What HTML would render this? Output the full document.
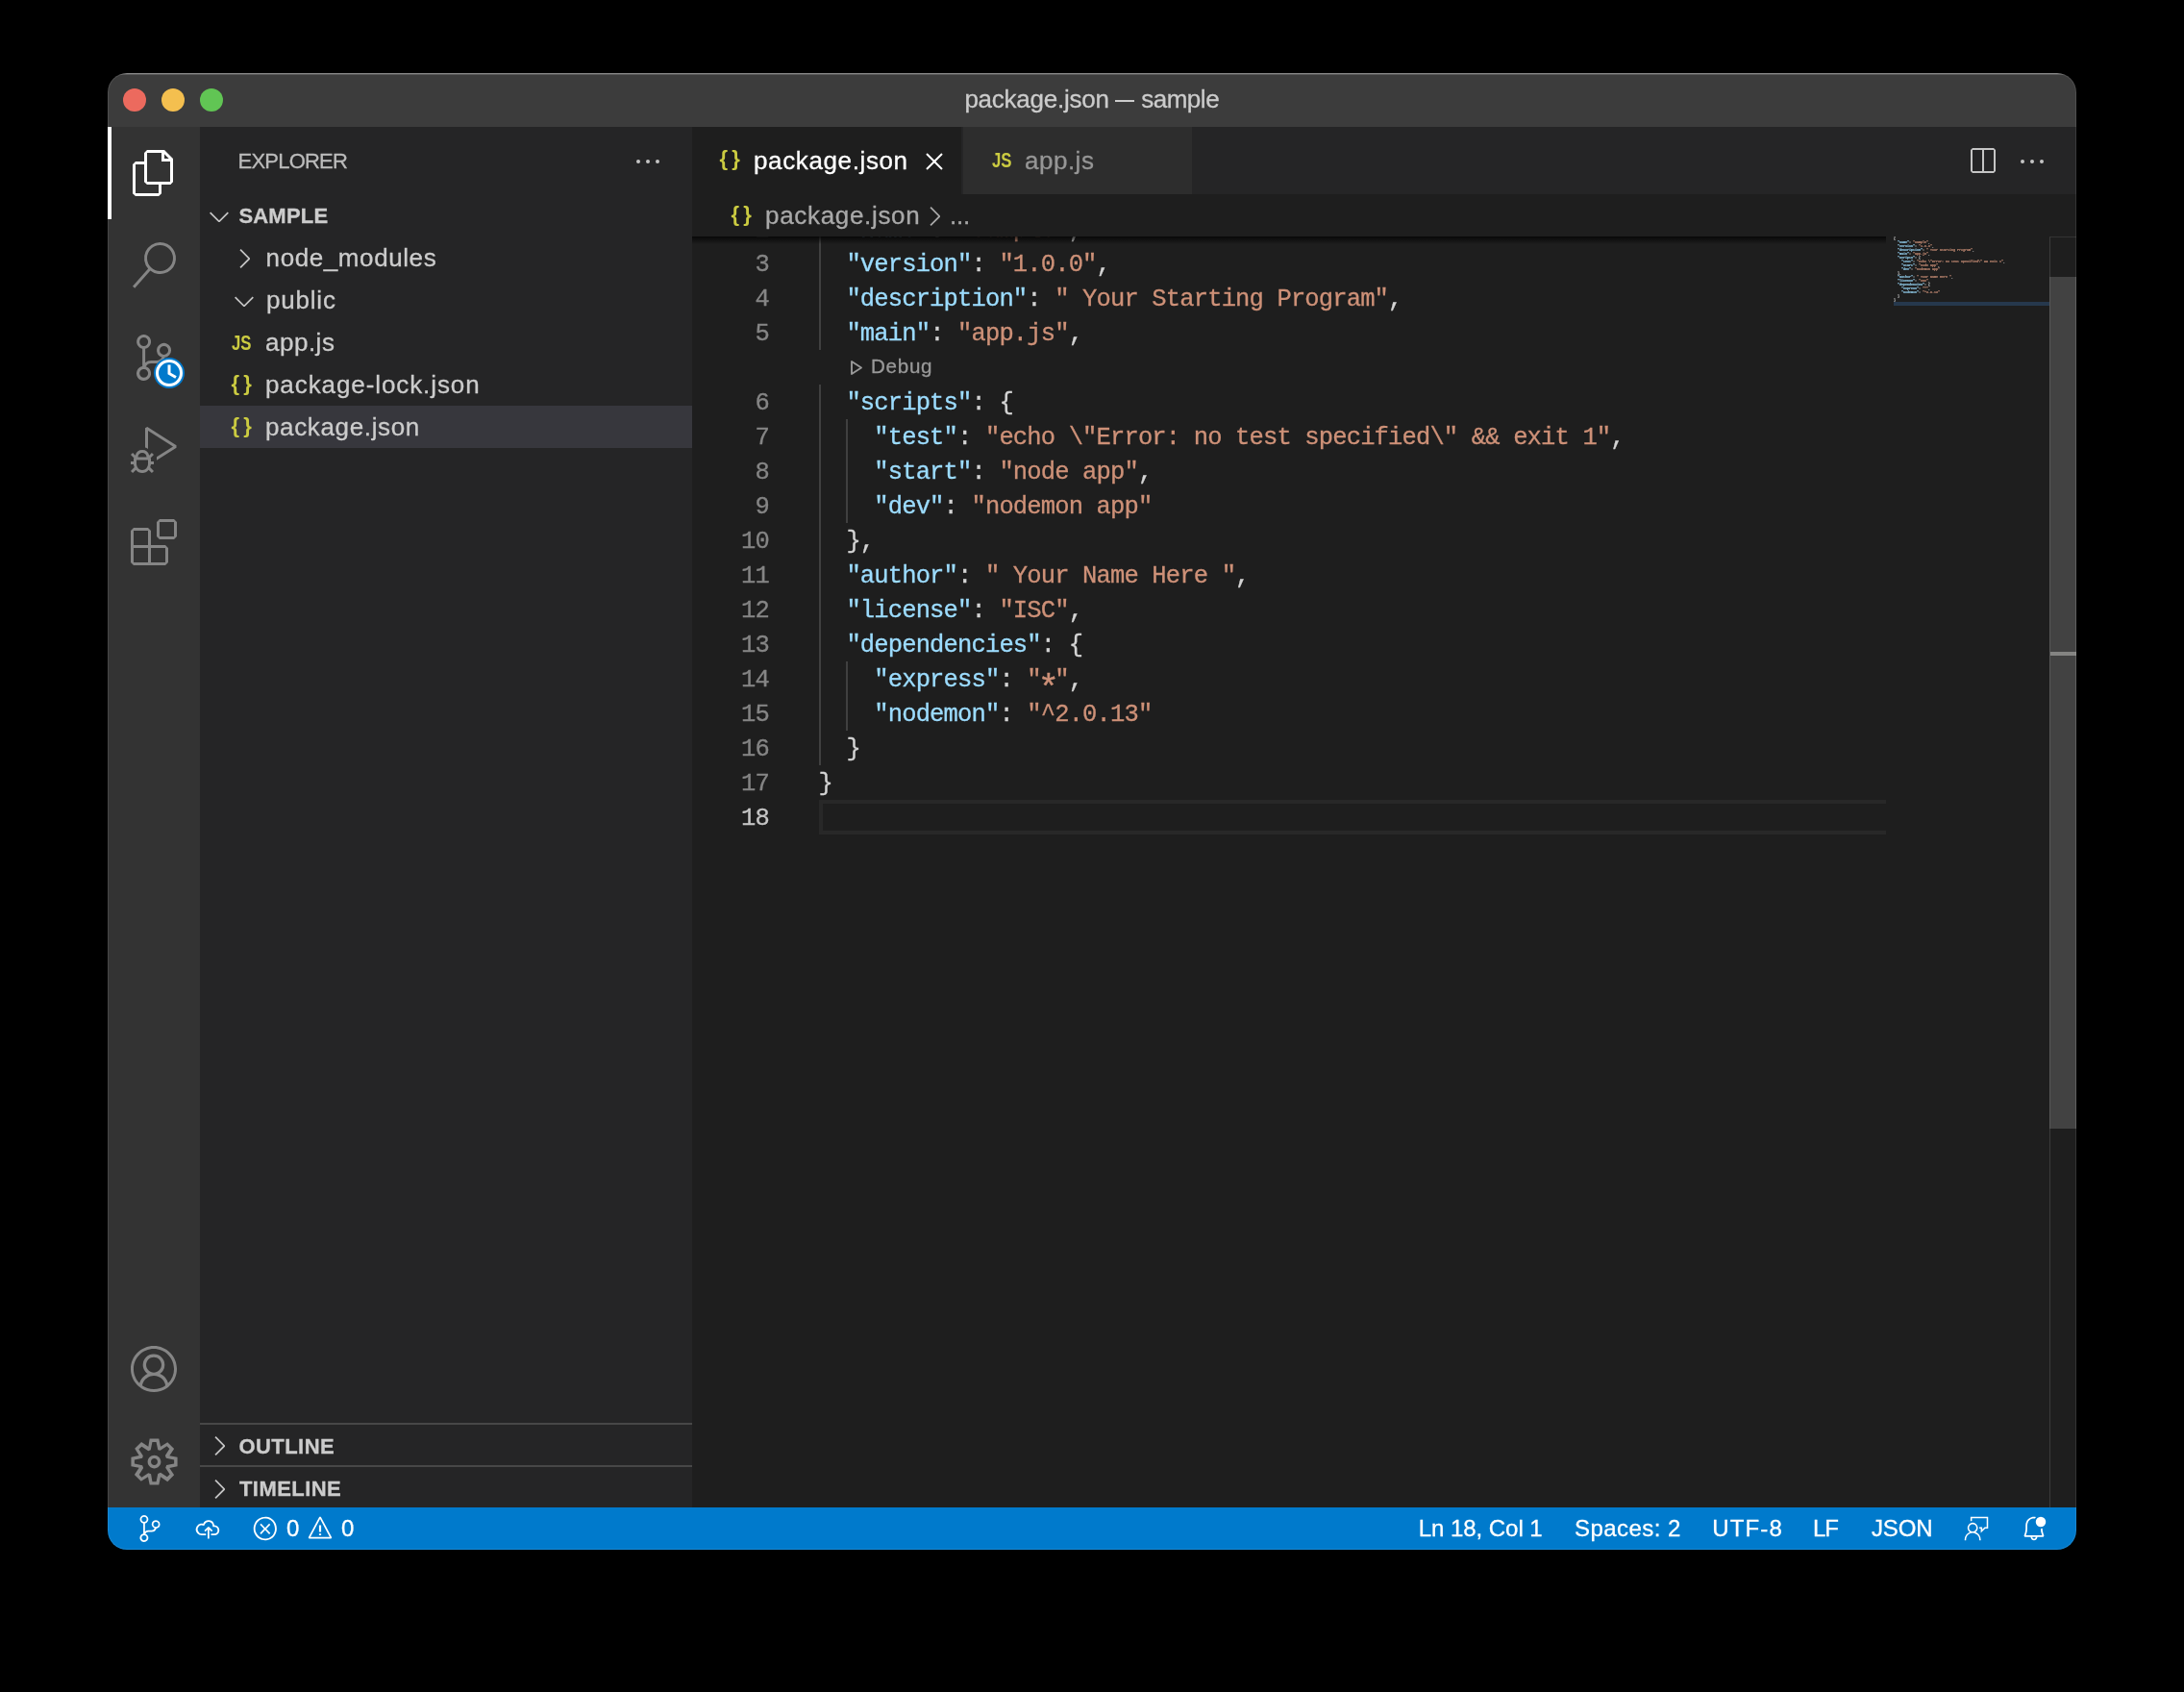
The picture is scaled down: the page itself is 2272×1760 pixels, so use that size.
<!DOCTYPE html>
<html>
<head>
<meta charset="utf-8">
<title>package.json — sample</title>
<style>
*{box-sizing:border-box;margin:0;padding:0}
html,body{width:2272px;height:1760px;background:#000;overflow:hidden}
body{font-family:"Liberation Sans",sans-serif;color:#ccc;position:relative}
#win{position:absolute;left:0;top:0;width:2272px;height:1760px;clip-path:inset(76px 112px 148px 112px round 20px);will-change:transform}
.t,.ln,.cl{-webkit-text-stroke:0.3px currentColor}
.abs{position:absolute}
.t{position:absolute;white-space:pre;line-height:1}
svg{position:absolute;overflow:visible}
/* regions */
#titlebar{left:112px;top:76px;width:2048px;height:56px;background:#3c3c3c}
#activity{left:112px;top:132px;width:96px;height:1436px;background:#333333}
#sidebar{left:208px;top:132px;width:512px;height:1436px;background:#252526}
#tabs{left:720px;top:132px;width:1440px;height:70px;background:#252526}
#editor{left:720px;top:202px;width:1440px;height:1366px;background:#1e1e1e}
#status{left:112px;top:1568px;width:2048px;height:44px;background:#007acc}
.ui26{font-size:26px}
.ui22{font-size:22px}
.ui24{font-size:24px}
.mono{font-family:"Liberation Mono",monospace;font-size:24px;letter-spacing:0.05px}
.ico-br{font-size:22px;font-weight:bold;color:#cbcb41;line-height:43px;letter-spacing:-1px;-webkit-text-stroke:0;margin-top:-2px}
.ico-js{font-size:21.5px;font-weight:bold;color:#cbcb41;line-height:44px;letter-spacing:0;-webkit-text-stroke:0;transform:scaleX(.78);transform-origin:0 50%}
.k{color:#9cdcfe}.s{color:#ce9178}.p{color:#d4d4d4}
.ln{position:absolute;width:60px;left:740px;text-align:right;color:#858585;font-family:"Liberation Mono",monospace;font-size:25.5px;line-height:36px;height:36px;letter-spacing:-0.85px;margin-top:2px}
.cl{position:absolute;left:853px;white-space:pre;font-family:"Liberation Mono",monospace;font-size:25.5px;line-height:36px;height:36px;letter-spacing:-0.85px;color:#d4d4d4;margin-top:2px}
.ast{display:inline-block;transform:translateY(10.6px) scale(1.45)}
.g{position:absolute;width:2px;background:#404040}
</style>
</head>
<body>
<div id="win">
  <div id="titlebar" class="abs"></div>
  <div id="activity" class="abs"></div>
  <div id="sidebar" class="abs"></div>
  <div id="tabs" class="abs"></div>
  <div id="editor" class="abs"></div>
  <div id="status" class="abs"></div>

  <!-- TITLEBAR -->
  <div class="abs" style="left:112px;top:76px;width:2048px;height:2px;background:linear-gradient(#8a8a8a,#4a4a4a)"></div>
  <div class="abs" style="left:128px;top:92px;width:24px;height:24px;border-radius:50%;background:#ec6a5e"></div>
  <div class="abs" style="left:168px;top:92px;width:24px;height:24px;border-radius:50%;background:#f4bf4f"></div>
  <div class="abs" style="left:208px;top:92px;width:24px;height:24px;border-radius:50%;background:#61c554"></div>
  <div id="title-a" class="t ui26" style="left:1003.4px;top:76px;line-height:55.5px;color:#cccccc;letter-spacing:-0.24px">package.json</div>
  <div class="abs" style="left:1160px;top:104px;width:20px;height:2px;background:#cccccc"></div>
  <div id="title-b" class="t ui26" style="left:1187.2px;top:76px;line-height:55.5px;color:#cccccc;letter-spacing:-0.48px">sample</div>

  <!--ACTIVITY-->

  <div class="abs" style="left:112px;top:132px;width:4px;height:96px;background:#fff"></div>
  <!-- files -->
  <svg style="left:136px;top:156px" width="48" height="48" viewBox="0 0 24 24" fill="#ffffff"><path d="M17.5 0h-9L7 1.5V6H2.5L1 7.5v15.07L2.5 24h12.07L16 22.57V18h4.7l1.3-1.43V4.5L17.5 0zm0 2.12l2.38 2.38H17.5V2.12zm-3 20.38h-12v-15H7v9.07L8.5 18h6v4.5zm6-6h-12v-15H16V6h4.5v10.5z"/></svg>
  <!-- search -->
  <svg style="left:136px;top:252px" width="48" height="48" viewBox="0 0 24 24" fill="#858585"><path d="M15.25 0a8.25 8.25 0 0 0-6.18 13.72L1 22.88l1.12 1 8.05-9.12A8.251 8.251 0 1 0 15.25.01V0zm0 15a6.75 6.75 0 1 1 0-13.5 6.75 6.75 0 0 1 0 13.5z"/></svg>
  <!-- scm -->
  <svg style="left:136px;top:348px" width="48" height="48" viewBox="0 0 24 24" fill="#858585"><path d="M21.007 8.222A3.738 3.738 0 0 0 15.045 5.2a3.737 3.737 0 0 0 1.156 6.583 2.988 2.988 0 0 1-2.668 1.67h-2.99a4.456 4.456 0 0 0-2.989 1.165V7.4a3.737 3.737 0 1 0-1.494 0v9.117a3.776 3.776 0 1 0 1.816.099 2.99 2.99 0 0 1 2.668-1.667h2.99a4.484 4.484 0 0 0 4.223-3.039 3.736 3.736 0 0 0 3.25-3.687zM4.565 3.738a2.242 2.242 0 1 1 4.484 0 2.242 2.242 0 0 1-4.484 0zm4.484 16.441a2.242 2.242 0 1 1-4.484 0 2.242 2.242 0 0 1 4.484 0zm8.221-9.715a2.242 2.242 0 1 1 0-4.485 2.242 2.242 0 0 1 0 4.485z"/></svg>
  <!-- scm badge -->
  <svg style="left:160px;top:372px" width="32" height="32" viewBox="0 0 32 32"><circle cx="16" cy="16" r="16" fill="#007acc"/><circle cx="16" cy="16" r="12.5" fill="none" stroke="#fff" stroke-width="3"/><path d="M16 7.5V16.5L23 20.5" fill="none" stroke="#fff" stroke-width="3"/></svg>
  <!-- debug -->
  <svg style="left:136px;top:444px" width="48" height="48" viewBox="0 0 24 24" fill="#858585"><path d="M10.94 13.5l-1.32 1.32a3.73 3.73 0 0 0-7.24 0L1.06 13.5 0 14.56l1.72 1.72-.22.22V18H0v1.5h1.5v.08c.077.489.214.966.41 1.42L0 22.94 1.06 24l1.65-1.65A4.308 4.308 0 0 0 6 24a4.31 4.31 0 0 0 3.29-1.65L10.94 24 12 22.94 10.09 21c.198-.464.336-.951.41-1.45v-.1H12V18h-1.5v-1.5l-.22-.22L12 14.56l-1.06-1.06zM6 13.5a2.25 2.25 0 0 1 2.25 2.25h-4.5A2.25 2.25 0 0 1 6 13.5zm3 6a3.33 3.33 0 0 1-3 3 3.33 3.33 0 0 1-3-3v-2.25h6v2.25zm14.76-9.9v1.26L13.5 17.37V15.6l8.5-5.37L9 2v9.46a5.07 5.07 0 0 0-1.5-.72V.63L8.64 0l15.12 9.6z"/></svg>
  <!-- extensions -->
  <svg style="left:136px;top:540px" width="48" height="48" viewBox="0 0 24 24" fill="#858585"><path d="M13.5 1.5L15 0h7.5L24 1.5V9l-1.5 1.5H15L13.5 9V1.5zm1.5 0V9h7.5V1.5H15zM0 15V6l1.5-1.5H9L10.5 6v7.5H18l1.5 1.5v7.5L18 24H1.5L0 22.5V15zm9-1.5V6H1.5v7.5H9zM9 15H1.5v7.5H9V15zm1.5 7.5H18V15h-7.5v7.5z"/></svg>
  <!-- account -->
  <svg style="left:136px;top:1400px" width="48" height="48" viewBox="0 0 16 16" fill="#858585"><path d="M16 7.992C16 3.58 12.416 0 8 0S0 3.58 0 7.992c0 2.43 1.104 4.62 2.832 6.09.016.016.032.016.032.032.144.112.288.224.448.336.08.048.144.111.224.175A7.98 7.98 0 0 0 8.016 16a7.98 7.98 0 0 0 4.48-1.375c.08-.048.144-.111.224-.16.144-.111.304-.223.448-.335.016-.016.032-.016.032-.032 1.696-1.487 2.8-3.676 2.8-6.106zm-8 7.001c-1.504 0-2.88-.48-4.016-1.279.016-.128.048-.255.08-.383a4.17 4.17 0 0 1 .416-.991c.176-.304.384-.576.64-.816.24-.24.528-.463.816-.639.304-.176.624-.304.976-.4A4.15 4.15 0 0 1 8 10.342a4.185 4.185 0 0 1 2.928 1.166c.368.368.656.8.864 1.295.112.288.192.592.24.911A7.03 7.03 0 0 1 8 14.993zm-2.448-7.4a2.49 2.49 0 0 1-.208-1.024c0-.351.064-.703.208-1.023.144-.32.336-.607.576-.847.24-.24.528-.431.848-.575.32-.144.672-.208 1.024-.208.368 0 .704.064 1.024.208.32.144.608.336.848.575.24.24.432.528.576.847.144.32.208.672.208 1.023 0 .368-.064.704-.208 1.023a2.84 2.84 0 0 1-.576.848 2.84 2.84 0 0 1-.848.575 2.715 2.715 0 0 1-2.064 0 2.84 2.84 0 0 1-.848-.575 2.526 2.526 0 0 1-.56-.848zm7.424 5.306c0-.032-.016-.048-.016-.08a5.22 5.22 0 0 0-.688-1.406 4.883 4.883 0 0 0-1.088-1.135 5.207 5.207 0 0 0-1.04-.608 2.82 2.82 0 0 0 .464-.383 4.2 4.2 0 0 0 .624-.784 3.624 3.624 0 0 0 .528-1.934 3.71 3.71 0 0 0-.288-1.47 3.799 3.799 0 0 0-.816-1.199 3.845 3.845 0 0 0-1.2-.8 3.72 3.72 0 0 0-1.472-.287 3.72 3.72 0 0 0-1.472.288 3.631 3.631 0 0 0-1.2.815 3.84 3.84 0 0 0-.8 1.199 3.71 3.71 0 0 0-.288 1.47c0 .352.048.688.144 1.007.096.336.224.64.4.927.16.288.384.544.624.784.144.144.304.271.48.383a5.12 5.12 0 0 0-1.04.624c-.416.32-.784.703-1.088 1.119a4.999 4.999 0 0 0-.688 1.406c-.016.032-.016.064-.016.08C1.776 11.636.992 9.91.992 7.992.992 4.14 4.144.991 8 .991s7.008 3.149 7.008 7.001a6.96 6.96 0 0 1-2.032 4.907z"/></svg>
  <!-- gear -->
  <svg style="left:132.5px;top:1492.5px" width="55" height="55" viewBox="0 0 16 16" fill="#858585"><path fill-rule="evenodd" clip-rule="evenodd" d="M9.1 4.4L8.6 2H7.4l-.5 2.4-.7.3-2-1.3-.9.8 1.3 2-.2.7-2.4.5v1.2l2.4.5.3.8-1.3 2 .8.8 2-1.3.8.3.4 2.3h1.2l.5-2.4.8-.3 2 1.3.8-.8-1.3-2 .3-.8 2.3-.4V7.4l-2.4-.5-.3-.8 1.3-2-.8-.8-2 1.3-.7-.2zM9.4 1l.5 2.4L12 2.1l2 2-1.4 2.1 2.4.4v2.8l-2.4.5L14 12l-2 2-2.1-1.4-.5 2.4H6.6l-.5-2.4L4 13.9l-2-2 1.4-2.1L1 9.4V6.6l2.4-.5L2.1 4l2-2 2.1 1.4.4-2.4h2.8zm.6 7c0 1.1-.9 2-2 2s-2-.9-2-2 .9-2 2-2 2 .9 2 2zM8 9c.6 0 1-.4 1-1s-.4-1-1-1-1 .4-1 1 .4 1 1 1z"/></svg>
  <!--SIDEBAR-->

  <div id="t-explorer" class="t ui22" style="left:247.6px;top:132px;line-height:72px;color:#bbbbbb;letter-spacing:-0.79px">EXPLORER</div>
  <svg style="left:658px;top:152px" width="32" height="32" viewBox="0 0 16 16" fill="#c5c5c5"><path d="M4 8a1 1 0 1 1-2 0 1 1 0 0 1 2 0zm5 0a1 1 0 1 1-2 0 1 1 0 0 1 2 0zm5 0a1 1 0 1 1-2 0 1 1 0 0 1 2 0z"/></svg>
  <svg style="left:212px;top:208.5px" width="32" height="32" viewBox="0 0 16 16" fill="#c5c5c5"><path d="M7.976 10.072l4.357-4.357.62.618L8.284 11h-.618L3 6.333l.619-.618 4.357 4.357z"/></svg>
  <div id="t-sample" class="t ui22" style="left:248.4px;top:203px;line-height:44px;font-weight:bold;color:#cccccc;letter-spacing:0.20px">SAMPLE</div>
  <svg style="left:238px;top:252.5px" width="32" height="32" viewBox="0 0 16 16" fill="#c5c5c5"><path d="M10.072 8.024L5.715 3.667l.618-.62L11 7.716v.618L6.333 13l-.618-.619 4.357-4.357z"/></svg>
  <div id="t-nm" class="t ui26" style="left:276.6px;top:247px;line-height:43px;letter-spacing:0.59px">node_modules</div>
  <svg style="left:238px;top:296.5px" width="32" height="32" viewBox="0 0 16 16" fill="#c5c5c5"><path d="M7.976 10.072l4.357-4.357.62.618L8.284 11h-.618L3 6.333l.619-.618 4.357 4.357z"/></svg>
  <div id="t-public" class="t ui26" style="left:277.0px;top:291px;line-height:43px;letter-spacing:0.80px">public</div>
  <div class="t ico-js" style="left:241px;top:335px">JS</div>
  <div id="t-appjs" class="t ui26" style="left:276.0px;top:335px;line-height:43px;letter-spacing:0.50px">app.js</div>
  <div class="t ico-br" style="left:240.5px;top:379px">{ }</div>
  <div id="t-pl" class="t ui26" style="left:276.0px;top:379px;line-height:43px;letter-spacing:0.91px">package-lock.json</div>
  <div class="abs" style="left:208px;top:422px;width:512px;height:44px;background:#37373d"></div>
  <div class="t ico-br" style="left:240.5px;top:423px">{ }</div>
  <div id="t-pj" class="t ui26" style="left:276.0px;top:423px;line-height:43px;letter-spacing:0.64px">package.json</div>
  <div class="abs" style="left:208px;top:1480px;width:512px;height:2px;background:#474747"></div>
  <svg style="left:212px;top:1488.4px" width="32" height="32" viewBox="0 0 16 16" fill="#c5c5c5"><path d="M10.072 8.024L5.715 3.667l.618-.62L11 7.716v.618L6.333 13l-.618-.619 4.357-4.357z"/></svg>
  <div id="t-outline" class="t ui22" style="left:248.4px;top:1482px;line-height:45px;font-weight:bold;color:#cccccc;letter-spacing:0.46px">OUTLINE</div>
  <div class="abs" style="left:208px;top:1524px;width:512px;height:2px;background:#474747"></div>
  <svg style="left:212px;top:1532.6px" width="32" height="32" viewBox="0 0 16 16" fill="#c5c5c5"><path d="M10.072 8.024L5.715 3.667l.618-.62L11 7.716v.618L6.333 13l-.618-.619 4.357-4.357z"/></svg>
  <div id="t-timeline" class="t ui22" style="left:249.0px;top:1526px;line-height:45px;font-weight:bold;color:#cccccc;letter-spacing:0.43px">TIMELINE</div>
  <!--TABS-->

  <div class="abs" style="left:720px;top:132px;width:280px;height:70px;background:#1e1e1e"></div>
  <div class="abs" style="left:1002px;top:132px;width:238px;height:70px;background:#2d2d2d"></div>
  <div class="t ico-br" style="left:748.5px;top:132px;line-height:69px">{ }</div>
  <div id="tab1" class="t ui26" style="left:784.0px;top:132px;line-height:70px;color:#ffffff;letter-spacing:0.62px">package.json</div>
  <svg style="left:956px;top:152px" width="32" height="32" viewBox="0 0 16 16" fill="#ffffff"><path d="M8 8.707l3.646 3.647.708-.707L8.707 8l3.647-3.646-.707-.708L8 7.293 4.354 3.646l-.707.708L7.293 8l-3.646 3.646.707.708L8 8.707z"/></svg>
  <div class="t ico-js" style="left:1031.5px;top:132px;line-height:70px">JS</div>
  <div id="tab2" class="t ui26" style="left:1066.0px;top:132px;line-height:70px;color:#969696;letter-spacing:0.50px">app.js</div>
  <svg style="left:2046px;top:152px" width="32" height="32" viewBox="0 0 16 16" fill="#c5c5c5"><path d="M14 1H3L2 2v11l1 1h11l1-1V2l-1-1zM8 13H3V2h5v11zm6 0H9V2h5v11z"/></svg>
  <svg style="left:2097.5px;top:152px" width="32" height="32" viewBox="0 0 16 16" fill="#c5c5c5"><path d="M4 8a1 1 0 1 1-2 0 1 1 0 0 1 2 0zm5 0a1 1 0 1 1-2 0 1 1 0 0 1 2 0zm5 0a1 1 0 1 1-2 0 1 1 0 0 1 2 0z"/></svg>
  <!-- breadcrumbs -->
  <div class="t ico-br" style="left:760.5px;top:203px;line-height:44px">{ }</div>
  <div id="bc1" class="t ui26" style="left:796.0px;top:202px;line-height:44px;color:#a9a9a9;letter-spacing:0.68px">package.json</div>
  <svg style="left:956px;top:208.5px" width="32" height="32" viewBox="0 0 16 16" fill="#a9a9a9"><path d="M10.072 8.024L5.715 3.667l.618-.62L11 7.716v.618L6.333 13l-.618-.619 4.357-4.357z"/></svg>
  <div id="bc2" class="t ui26" style="left:988.0px;top:202px;line-height:44px;color:#a9a9a9;letter-spacing:-0.25px">...</div>
  <!--EDITOR-->
  <div id="code" class="abs" style="left:720px;top:246px;width:1242px;height:1322px;overflow:hidden">
    <div class="abs" style="left:132px;top:586px;width:1110px;height:36px;border:4px solid #282828;border-right:none"></div>
    <div class="g" style="left:132px;top:-26px;height:144px"></div>
    <div class="g" style="left:132px;top:154px;height:396px"></div>
    <div class="g" style="left:160px;top:190px;height:108px"></div>
    <div class="g" style="left:160px;top:442px;height:72px"></div>
    <div class="ln" style="left:20px;top:-26px;color:#858585">2</div>
    <div class="cl" style="left:131.5px;top:-26px"><span class="p">  </span><span class="k">"name"</span><span class="p">: </span><span class="s">"sample"</span><span class="p">,</span></div>
    <div class="ln" style="left:20px;top:10px;color:#858585">3</div>
    <div class="cl" style="left:131.5px;top:10px"><span class="p">  </span><span class="k">"version"</span><span class="p">: </span><span class="s">"1.0.0"</span><span class="p">,</span></div>
    <div class="ln" style="left:20px;top:46px;color:#858585">4</div>
    <div class="cl" style="left:131.5px;top:46px"><span class="p">  </span><span class="k">"description"</span><span class="p">: </span><span class="s">" Your Starting Program"</span><span class="p">,</span></div>
    <div class="ln" style="left:20px;top:82px;color:#858585">5</div>
    <div class="cl" style="left:131.5px;top:82px"><span class="p">  </span><span class="k">"main"</span><span class="p">: </span><span class="s">"app.js"</span><span class="p">,</span></div>
    <div class="ln" style="left:20px;top:154px;color:#858585">6</div>
    <div class="cl" style="left:131.5px;top:154px"><span class="p">  </span><span class="k">"scripts"</span><span class="p">: {</span></div>
    <div class="ln" style="left:20px;top:190px;color:#858585">7</div>
    <div class="cl" style="left:131.5px;top:190px"><span class="p">    </span><span class="k">"test"</span><span class="p">: </span><span class="s">"echo \"Error: no test specified\" &amp;&amp; exit 1"</span><span class="p">,</span></div>
    <div class="ln" style="left:20px;top:226px;color:#858585">8</div>
    <div class="cl" style="left:131.5px;top:226px"><span class="p">    </span><span class="k">"start"</span><span class="p">: </span><span class="s">"node app"</span><span class="p">,</span></div>
    <div class="ln" style="left:20px;top:262px;color:#858585">9</div>
    <div class="cl" style="left:131.5px;top:262px"><span class="p">    </span><span class="k">"dev"</span><span class="p">: </span><span class="s">"nodemon app"</span></div>
    <div class="ln" style="left:20px;top:298px;color:#858585">10</div>
    <div class="cl" style="left:131.5px;top:298px"><span class="p">  },</span></div>
    <div class="ln" style="left:20px;top:334px;color:#858585">11</div>
    <div class="cl" style="left:131.5px;top:334px"><span class="p">  </span><span class="k">"author"</span><span class="p">: </span><span class="s">" Your Name Here "</span><span class="p">,</span></div>
    <div class="ln" style="left:20px;top:370px;color:#858585">12</div>
    <div class="cl" style="left:131.5px;top:370px"><span class="p">  </span><span class="k">"license"</span><span class="p">: </span><span class="s">"ISC"</span><span class="p">,</span></div>
    <div class="ln" style="left:20px;top:406px;color:#858585">13</div>
    <div class="cl" style="left:131.5px;top:406px"><span class="p">  </span><span class="k">"dependencies"</span><span class="p">: {</span></div>
    <div class="ln" style="left:20px;top:442px;color:#858585">14</div>
    <div class="cl" style="left:131.5px;top:442px"><span class="p">    </span><span class="k">"express"</span><span class="p">: </span><span class="s">"<span class="ast">*</span>"</span><span class="p">,</span></div>
    <div class="ln" style="left:20px;top:478px;color:#858585">15</div>
    <div class="cl" style="left:131.5px;top:478px"><span class="p">    </span><span class="k">"nodemon"</span><span class="p">: </span><span class="s">"^2.0.13"</span></div>
    <div class="ln" style="left:20px;top:514px;color:#858585">16</div>
    <div class="cl" style="left:131.5px;top:514px"><span class="p">  }</span></div>
    <div class="ln" style="left:20px;top:550px;color:#858585">17</div>
    <div class="cl" style="left:131.5px;top:550px"><span class="p">}</span></div>
    <div class="ln" style="left:20px;top:586px;color:#c6c6c6">18</div>
    <svg style="left:0;top:0" width="300" height="200" viewBox="720 246 300 200"><path d="M886 376L886 389L896 382.5Z" fill="none" stroke="#999999" stroke-width="1.9" stroke-linejoin="round"/></svg>
    <div id="lens" class="t" style="left:186.0px;top:118px;line-height:33.8px;font-size:20.6px;color:#999999;letter-spacing:0.70px">Debug</div>
    <div class="abs" style="left:0;top:0;width:1242px;height:8px;background:linear-gradient(rgba(0,0,0,.75),rgba(0,0,0,0))"></div>
  </div>

  <!-- minimap -->
  <div id="mm" class="abs" style="left:1970px;top:246px;width:1200px;transform-origin:0 0;transform:scale(0.13889);font-family:'Liberation Mono',monospace;font-size:24px;line-height:28.8px;font-weight:bold;white-space:pre;-webkit-text-stroke:1.6px currentColor;opacity:.8"><span class="p">{</span>
<span class="p">  </span><span class="k">"name"</span><span class="p">: </span><span class="s">"sample"</span><span class="p">,</span>
<span class="p">  </span><span class="k">"version"</span><span class="p">: </span><span class="s">"1.0.0"</span><span class="p">,</span>
<span class="p">  </span><span class="k">"description"</span><span class="p">: </span><span class="s">" Your Starting Program"</span><span class="p">,</span>
<span class="p">  </span><span class="k">"main"</span><span class="p">: </span><span class="s">"app.js"</span><span class="p">,</span>
<span class="p">  </span><span class="k">"scripts"</span><span class="p">: {</span>
<span class="p">    </span><span class="k">"test"</span><span class="p">: </span><span class="s">"echo \"Error: no test specified\" &amp;&amp; exit 1"</span><span class="p">,</span>
<span class="p">    </span><span class="k">"start"</span><span class="p">: </span><span class="s">"node app"</span><span class="p">,</span>
<span class="p">    </span><span class="k">"dev"</span><span class="p">: </span><span class="s">"nodemon app"</span>
<span class="p">  },</span>
<span class="p">  </span><span class="k">"author"</span><span class="p">: </span><span class="s">" Your Name Here "</span><span class="p">,</span>
<span class="p">  </span><span class="k">"license"</span><span class="p">: </span><span class="s">"ISC"</span><span class="p">,</span>
<span class="p">  </span><span class="k">"dependencies"</span><span class="p">: {</span>
<span class="p">    </span><span class="k">"express"</span><span class="p">: </span><span class="s">"*"</span><span class="p">,</span>
<span class="p">    </span><span class="k">"nodemon"</span><span class="p">: </span><span class="s">"^2.0.13"</span>
<span class="p">  }</span>
<span class="p">}</span></div>
  <div class="abs" style="left:1970px;top:314px;width:162px;height:4px;background:#26384d"></div>
  <!-- scrollbar -->
  <div class="abs" style="left:2132px;top:246px;width:28px;height:1322px;border-left:1px solid #3b3b3b;border-top:1px solid #333"></div>
  <div class="abs" style="left:2132px;top:288px;width:28px;height:886px;background:#424242;border-left:1px solid #575757;border-right:1px solid #4e4e4e"></div>
  <div class="abs" style="left:2133px;top:678px;width:27px;height:4px;background:#848482"></div>
  <!--STATUS-->

  <svg style="left:142px;top:1576px" width="28" height="28" viewBox="0 0 24 24" fill="#ffffff"><path d="M21.007 8.222A3.738 3.738 0 0 0 15.045 5.2a3.737 3.737 0 0 0 1.156 6.583 2.988 2.988 0 0 1-2.668 1.67h-2.99a4.456 4.456 0 0 0-2.989 1.165V7.4a3.737 3.737 0 1 0-1.494 0v9.117a3.776 3.776 0 1 0 1.816.099 2.99 2.99 0 0 1 2.668-1.667h2.99a4.484 4.484 0 0 0 4.223-3.039 3.736 3.736 0 0 0 3.25-3.687zM4.565 3.738a2.242 2.242 0 1 1 4.484 0 2.242 2.242 0 0 1-4.484 0zm4.484 16.441a2.242 2.242 0 1 1-4.484 0 2.242 2.242 0 0 1 4.484 0zm8.221-9.715a2.242 2.242 0 1 1 0-4.485 2.242 2.242 0 0 1 0 4.485z"/></svg>
  <svg style="left:202px;top:1576px" width="28" height="28" viewBox="0 0 16 16" fill="#ffffff"><path d="M11.956 6h.05a2.99 2.99 0 0 1 2.117.879 3.003 3.003 0 0 1 0 4.242 2.99 2.99 0 0 1-2.117.879h-1.995v-1h1.995a2.002 2.002 0 0 0 0-4h-.914l-.123-.857a2.49 2.49 0 0 0-2.126-2.122A2.478 2.478 0 0 0 6.231 5.5l-.333.762-.809-.189A2.49 2.49 0 0 0 4.523 6c-.662 0-1.297.263-1.764.732A2.503 2.503 0 0 0 4.523 11h2.494v1H4.523a3.486 3.486 0 0 1-2.628-1.16 3.502 3.502 0 0 1-.4-4.137A3.497 3.497 0 0 1 3.853 5.06c.486-.09.987-.077 1.468.041a3.486 3.486 0 0 1 3.657-2.06A3.479 3.479 0 0 1 11.956 6zm-1.663 3.853L8.979 8.54v5.436h-.994v-5.4L6.707 9.854 6 9.146 8.146 7h.708L11 9.146l-.707.707z"/></svg>
  <svg style="left:261.8px;top:1576px" width="28" height="28" viewBox="0 0 16 16" fill="#ffffff"><path d="M8.6 1c1.6.1 3.1.9 4.2 2 1.3 1.4 2 3.1 2 5.1 0 1.6-.6 3.1-1.6 4.4-1 1.2-2.4 2.1-4 2.4-1.6.3-3.2.1-4.6-.7-1.4-.8-2.5-2-3.1-3.5C.9 9.2.8 7.5 1.3 6c.5-1.6 1.4-2.9 2.8-3.8C5.4 1.3 7 .9 8.6 1zm.5 12.9c1.3-.3 2.5-1 3.4-2.1.8-1.1 1.3-2.4 1.2-3.8 0-1.6-.6-3.2-1.7-4.3-1-1-2.2-1.6-3.6-1.7-1.3-.1-2.7.2-3.8 1-1.1.8-1.9 1.9-2.3 3.3-.4 1.3-.4 2.7.2 4 .6 1.3 1.5 2.3 2.7 3 1.2.7 2.6.9 3.9.6zM7.9 7.5L10.3 5l.7.7-2.4 2.5 2.4 2.5-.7.7-2.4-2.5-2.4 2.5-.7-.7 2.4-2.5-2.4-2.5.7-.7 2.4 2.5z"/></svg>
  <div id="s-e0" class="t ui24" style="left:298.0px;top:1568px;line-height:44px;color:#fff;letter-spacing:-0.50px">0</div>
  <svg style="left:318.8px;top:1576px" width="28" height="28" viewBox="0 0 16 16" fill="#ffffff"><path d="M7.56 1h.88l6.54 12.26-.44.74H1.44L1 13.26 7.56 1zM8 2.28L2.28 13H13.7L8 2.28zM8.625 12v-1h-1.25v1h1.25zm-1.25-2V6h1.25v4h-1.25z"/></svg>
  <div id="s-w0" class="t ui24" style="left:355.0px;top:1568px;line-height:44px;color:#fff;letter-spacing:-0.50px">0</div>
  <div id="s-ln" class="t ui24" style="left:1475.8px;top:1568px;line-height:44px;color:#fff;letter-spacing:-0.05px">Ln 18, Col 1</div>
  <div id="s-sp" class="t ui24" style="left:1638.0px;top:1568px;line-height:44px;color:#fff;letter-spacing:0.44px">Spaces: 2</div>
  <div id="s-utf" class="t ui24" style="left:1781.2px;top:1568px;line-height:44px;color:#fff;letter-spacing:1.15px">UTF-8</div>
  <div id="s-lf" class="t ui24" style="left:1886.0px;top:1568px;line-height:44px;color:#fff;letter-spacing:-1.00px">LF</div>
  <div id="s-json" class="t ui24" style="left:1947.0px;top:1568px;line-height:44px;color:#fff;letter-spacing:-0.18px">JSON</div>
  <svg style="left:2042px;top:1576px" width="28" height="28" viewBox="0 0 16 16" fill="#ffffff"><path fill-rule="evenodd" clip-rule="evenodd" d="M7.549 10.078c.46.182.88.424 1.258.725.378.3.701.65.97 1.046a4.829 4.829 0 0 1 .848 2.714V15H9.75v-.438a3.894 3.894 0 0 0-1.155-2.782 4.054 4.054 0 0 0-1.251-.84 3.898 3.898 0 0 0-1.532-.315A3.894 3.894 0 0 0 3.03 11.78a4.06 4.06 0 0 0-.84 1.251c-.206.474-.31.985-.315 1.531V15H1v-.438a4.724 4.724 0 0 1 .848-2.713 4.918 4.918 0 0 1 2.229-1.77 2.994 2.994 0 0 1-.555-.493 3.156 3.156 0 0 1-.417-.602 2.942 2.942 0 0 1-.26-.683 3.345 3.345 0 0 1-.095-.739c0-.423.08-.82.24-1.189a3.095 3.095 0 0 1 1.626-1.627 3.067 3.067 0 0 1 2.386-.007 3.095 3.095 0 0 1 1.627 1.627 3.067 3.067 0 0 1 .157 1.928c-.06.237-.148.465-.266.684a3.506 3.506 0 0 1-.417.608c-.16.187-.345.35-.554.492zM5.812 9.75c.301 0 .584-.057.848-.17a2.194 2.194 0 0 0 1.162-1.163c.119-.269.178-.554.178-.854a2.138 2.138 0 0 0-.643-1.538 2.383 2.383 0 0 0-.697-.472 2.048 2.048 0 0 0-.848-.178c-.3 0-.583.057-.847.17a2.218 2.218 0 0 0-1.17 1.17c-.113.264-.17.547-.17.848 0 .3.057.583.17.847.115.26.27.49.466.69.196.201.428.36.697.48.27.118.554.175.854.17zM15 1v7h-1.75l-2.625 2.625V8H9.75v-.875h1.75v1.388l1.388-1.388h1.237v-5.25h-8.75v1.572a7.255 7.255 0 0 0-.438.069 2.62 2.62 0 0 0-.437.123V1H15z"/></svg>
  <svg style="left:2101.5px;top:1576px" width="28" height="28" viewBox="0 0 16 16" fill="#ffffff"><path d="M12.994 7.875A4.008 4.008 0 0 1 12 8h-.01v.217c0 .909.143 1.818.442 2.691l.371 1.113h-9.63v-.012l.37-1.113a8.633 8.633 0 0 0 .443-2.691V6.004c0-.563.12-1.113.347-1.616.227-.514.55-.969.969-1.34.419-.382.91-.67 1.436-.837.538-.18 1.1-.24 1.65-.18l.12.018a4 4 0 0 1 .673-.887 5.15 5.15 0 0 0-.697-.135c-.694-.072-1.4 0-2.07.227-.67.215-1.28.574-1.794 1.053a4.923 4.923 0 0 0-1.208 1.675 5.067 5.067 0 0 0-.431 2.022v2.2a7.61 7.61 0 0 1-.383 2.37L2 12.343l.479.658h3.505c0 .526.215 1.04.586 1.412.37.37.885.586 1.412.586.526 0 1.04-.215 1.411-.586s.587-.886.587-1.412h3.505l.478-.658-.586-1.77a7.63 7.63 0 0 1-.383-2.381v-.318zM7.982 14.02a1.041 1.041 0 0 1-.705-.298.984.984 0 0 1-.299-.718h2.008c0 .263-.107.526-.299.718a.986.986 0 0 1-.705.298z"/><path d="M12 7a3 3 0 1 0 0-6 3 3 0 0 0 0 6z"/></svg>
  <!-- window inner border -->
  <div class="abs" style="left:112px;top:76px;width:2048px;height:1536px;border-radius:20px;box-shadow:inset 0 0 0 1px rgba(255,255,255,.10);pointer-events:none"></div>
</div>
</body>
</html>
